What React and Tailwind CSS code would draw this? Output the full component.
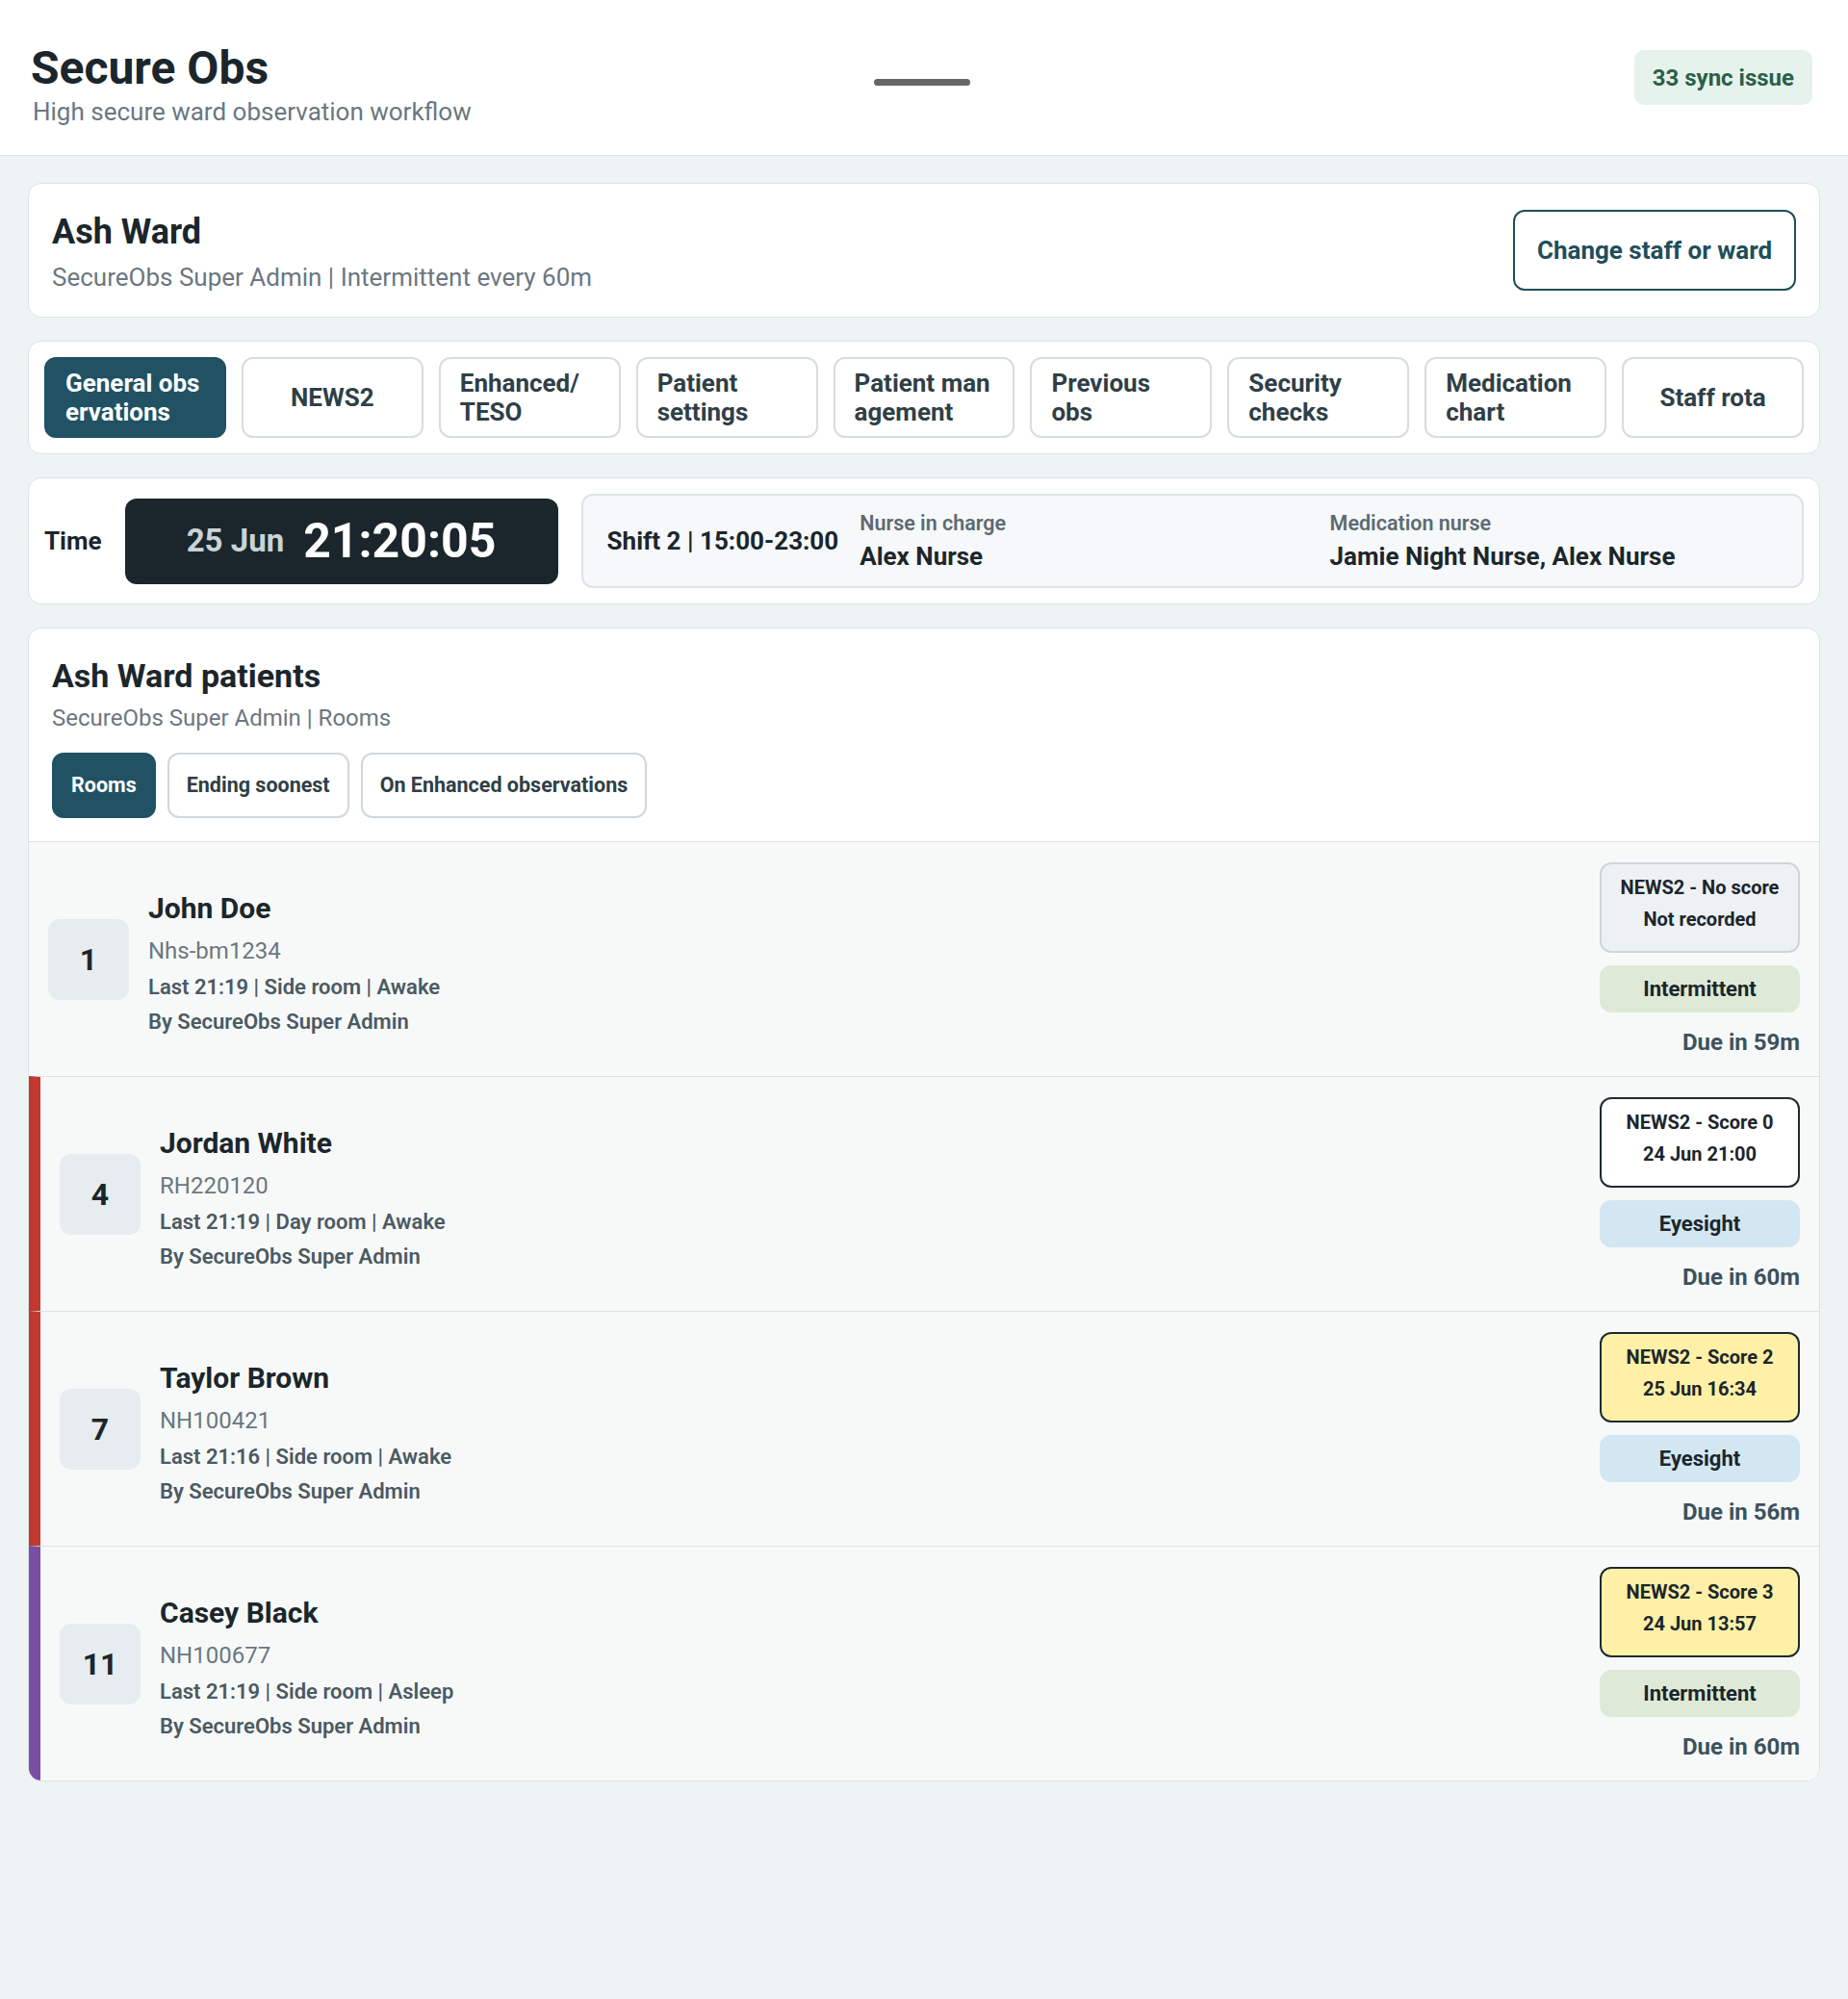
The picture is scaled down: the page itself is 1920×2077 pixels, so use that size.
import React from "react";

const tabs = [
  ["General obs", "ervations"],
  ["NEWS2"],
  ["Enhanced/", "TESO"],
  ["Patient", "settings"],
  ["Patient man", "agement"],
  ["Previous", "obs"],
  ["Security", "checks"],
  ["Medication", "chart"],
  ["Staff rota"],
];

const patients = [
  {
    room: "1",
    name: "John Doe",
    id: "Nhs-bm1234",
    last: "Last 21:19 | Side room | Awake",
    news: ["NEWS2 - No score", "Not recorded"],
    newsStyle: "bg-[#eef1f4] border-[#cdd5da]",
    obs: "Intermittent",
    obsStyle: "bg-[#dfe9d8]",
    due: "Due in 59m",
    stripe: "",
  },
  {
    room: "4",
    name: "Jordan White",
    id: "RH220120",
    last: "Last 21:19 | Day room | Awake",
    news: ["NEWS2 - Score 0", "24 Jun 21:00"],
    newsStyle: "bg-white border-[#1f2a30]",
    obs: "Eyesight",
    obsStyle: "bg-[#d2e7f2]",
    due: "Due in 60m",
    stripe: "border-l-[12px] border-l-[#c0392f]",
  },
  {
    room: "7",
    name: "Taylor Brown",
    id: "NH100421",
    last: "Last 21:16 | Side room | Awake",
    news: ["NEWS2 - Score 2", "25 Jun 16:34"],
    newsStyle: "bg-[#fef0a6] border-[#1f2a30]",
    obs: "Eyesight",
    obsStyle: "bg-[#d2e7f2]",
    due: "Due in 56m",
    stripe: "border-l-[12px] border-l-[#c0392f]",
  },
  {
    room: "11",
    name: "Casey Black",
    id: "NH100677",
    last: "Last 21:19 | Side room | Asleep",
    news: ["NEWS2 - Score 3", "24 Jun 13:57"],
    newsStyle: "bg-[#fef0a6] border-[#1f2a30]",
    obs: "Intermittent",
    obsStyle: "bg-[#dfe9d8]",
    due: "Due in 60m",
    stripe: "border-l-[12px] border-l-[#7a4ea3]",
  },
];

const PatientRow = ({ p }) => (
  <div
    className={`flex items-center bg-[#f7f9f8] border-t border-[#dbe2e5] pt-[21px] pb-5 pl-5 pr-5 ${p.stripe}`}
  >
    <div className="w-[84px] h-[84px] rounded-[12px] bg-[#e6ecef] flex items-center justify-center text-[32px] font-bold text-[#1b262c]">
      {p.room}
    </div>
    <div className="flex-1 ml-5 pt-2">
      <div className="text-[30px] leading-[36px] font-bold text-[#1b262c] mb-[11px]">{p.name}</div>
      <div className="text-[24px] leading-[30px] text-[#6b7780] mb-2">{p.id}</div>
      <div className="text-[22px] leading-[30px] font-semibold text-[#4b5a63] mb-[6px]">{p.last}</div>
      <div className="text-[22px] leading-[30px] font-semibold text-[#4b5a63]">By SecureObs Super Admin</div>
    </div>
    <div className="w-[208px] flex flex-col">
      <div
        className={`rounded-[12px] border-2 pt-2 pb-4 px-1 text-center text-[20px] leading-[33px] font-bold text-[#1b262c] ${p.newsStyle}`}
      >
        <div>{p.news[0]}</div>
        <div>{p.news[1]}</div>
      </div>
      <div
        className={`mt-[13px] h-[49px] rounded-[12px] flex items-center justify-center text-[22px] font-bold text-[#1b262c] ${p.obsStyle}`}
      >
        {p.obs}
      </div>
      <div className="mt-4 text-right text-[24px] leading-[30px] font-bold text-[#3d525c]">{p.due}</div>
    </div>
  </div>
);

export default function App() {
  return (
    <div className="min-h-[2077px] bg-[#eef3f3] font-['Roboto',sans-serif] text-[#1b262c]">
      {/* Top bar */}
      <header className="h-[162px] bg-white border-b border-[#dfe6e8] grid grid-cols-[1fr_auto_1fr] items-center pl-8 pr-[37px]">
        <div className="pt-[14px]">
          <h1 className="text-[48px] leading-[52px] font-bold text-[#1b262c]">Secure Obs</h1>
          <p className="mt-1 ml-[2px] text-[26px] leading-[30px] text-[#6b7780]">
            High secure ward observation workflow
          </p>
        </div>
        <div className="w-[100px] h-[7px] rounded-full bg-[#666666] mt-[9px]" />
        <div className="justify-self-end h-[57px] px-[19px] rounded-[10px] bg-[#e6f2ec] text-[#2a6049] text-[24px] font-bold flex items-center">
          33 sync issue
        </div>
      </header>

      <main className="px-[29px] pt-[28px] pb-10 flex flex-col gap-6">
        {/* Ward card */}
        <section className="h-[140px] rounded-[14px] border border-[#dde4e6] bg-white px-6 flex items-center justify-between">
          <div className="pt-1">
            <h2 className="text-[36px] leading-[40px] font-bold text-[#1b262c]">Ash Ward</h2>
            <p className="mt-3 text-[26px] leading-[30px] text-[#6b7780]">
              SecureObs Super Admin | Intermittent every 60m
            </p>
          </div>
          <button className="w-[294px] h-[84px] rounded-[12px] border-2 border-[#1f4f5c] text-[26px] font-bold text-[#1f4e5a]">
            Change staff or ward
          </button>
        </section>

        {/* Tabs */}
        <section className="rounded-[14px] border border-[#dde4e6] bg-white p-4">
          <div className="grid grid-cols-9 gap-4">
            {tabs.map((t, i) => (
              <button
                key={i}
                className={`h-[84px] rounded-[12px] border-2 px-5 flex items-center text-left text-[26px] leading-[30px] font-bold whitespace-nowrap ${
                  t.length > 1 ? "justify-start" : "justify-center"
                } ${
                  i === 0
                    ? "bg-[#205263] border-[#205263] text-white"
                    : "bg-white border-[#d5dde1] text-[#2f3f47]"
                }`}
              >
                <span>
                  {t.map((line, j) => (
                    <span key={j} className="block">
                      {line}
                    </span>
                  ))}
                </span>
              </button>
            ))}
          </div>
        </section>

        {/* Time and shift */}
        <section className="rounded-[14px] border border-[#dde4e6] bg-white p-4 flex items-center gap-[24px]">
          <span className="text-[26px] font-bold text-[#1b262c]">Time</span>
          <div className="w-[450px] h-[89px] rounded-[12px] bg-[#1b262c] flex items-center justify-center gap-5">
            <span className="text-[33px] leading-[36px] font-bold text-[#c9d3d7]">25 Jun</span>
            <span className="text-[50px] leading-[54px] font-bold text-white">21:20:05</span>
          </div>
          <div className="flex-1 h-[98px] rounded-[12px] border-2 border-[#dde3e6] bg-[#f6f8f9] pl-[25px] pr-5 flex items-center gap-[22px]">
            <span className="text-[26px] font-bold text-[#1b262c] whitespace-nowrap">Shift 2 | 15:00-23:00</span>
            <div className="flex-1 grid grid-cols-2 gap-[18px]">
              <div>
                <div className="text-[21.5px] leading-[28px] font-semibold text-[#5c6b73]">Nurse in charge</div>
                <div className="mt-1 text-[26px] leading-[32px] font-bold text-[#1b262c]">Alex Nurse</div>
              </div>
              <div>
                <div className="text-[21.5px] leading-[28px] font-semibold text-[#5c6b73]">Medication nurse</div>
                <div className="mt-1 text-[26px] leading-[32px] font-bold text-[#1b262c]">
                  Jamie Night Nurse, Alex Nurse
                </div>
              </div>
            </div>
          </div>
        </section>

        {/* Patients */}
        <section className="rounded-[14px] border border-[#dde4e6] bg-white overflow-hidden">
          <div className="pt-[30px] px-6 pb-6">
            <h2 className="text-[34px] leading-[38px] font-bold text-[#1b262c]">Ash Ward patients</h2>
            <p className="mt-[10px] text-[24px] leading-[30px] text-[#6b7780]">SecureObs Super Admin | Rooms</p>
            <div className="mt-[21px] flex gap-3">
              <button className="h-[68px] px-[18px] rounded-[12px] border-2 border-[#205263] bg-[#205263] text-white text-[21.5px] font-bold">
                Rooms
              </button>
              <button className="h-[68px] px-[18px] rounded-[12px] border-2 border-[#cfd8dc] bg-white text-[#2f3f47] text-[21.5px] font-bold">
                Ending soonest
              </button>
              <button className="h-[68px] px-[18px] rounded-[12px] border-2 border-[#cfd8dc] bg-white text-[#2f3f47] text-[21.5px] font-bold">
                On Enhanced observations
              </button>
            </div>
          </div>
          {patients.map((p) => (
            <PatientRow key={p.room} p={p} />
          ))}
        </section>
      </main>
    </div>
  );
}
